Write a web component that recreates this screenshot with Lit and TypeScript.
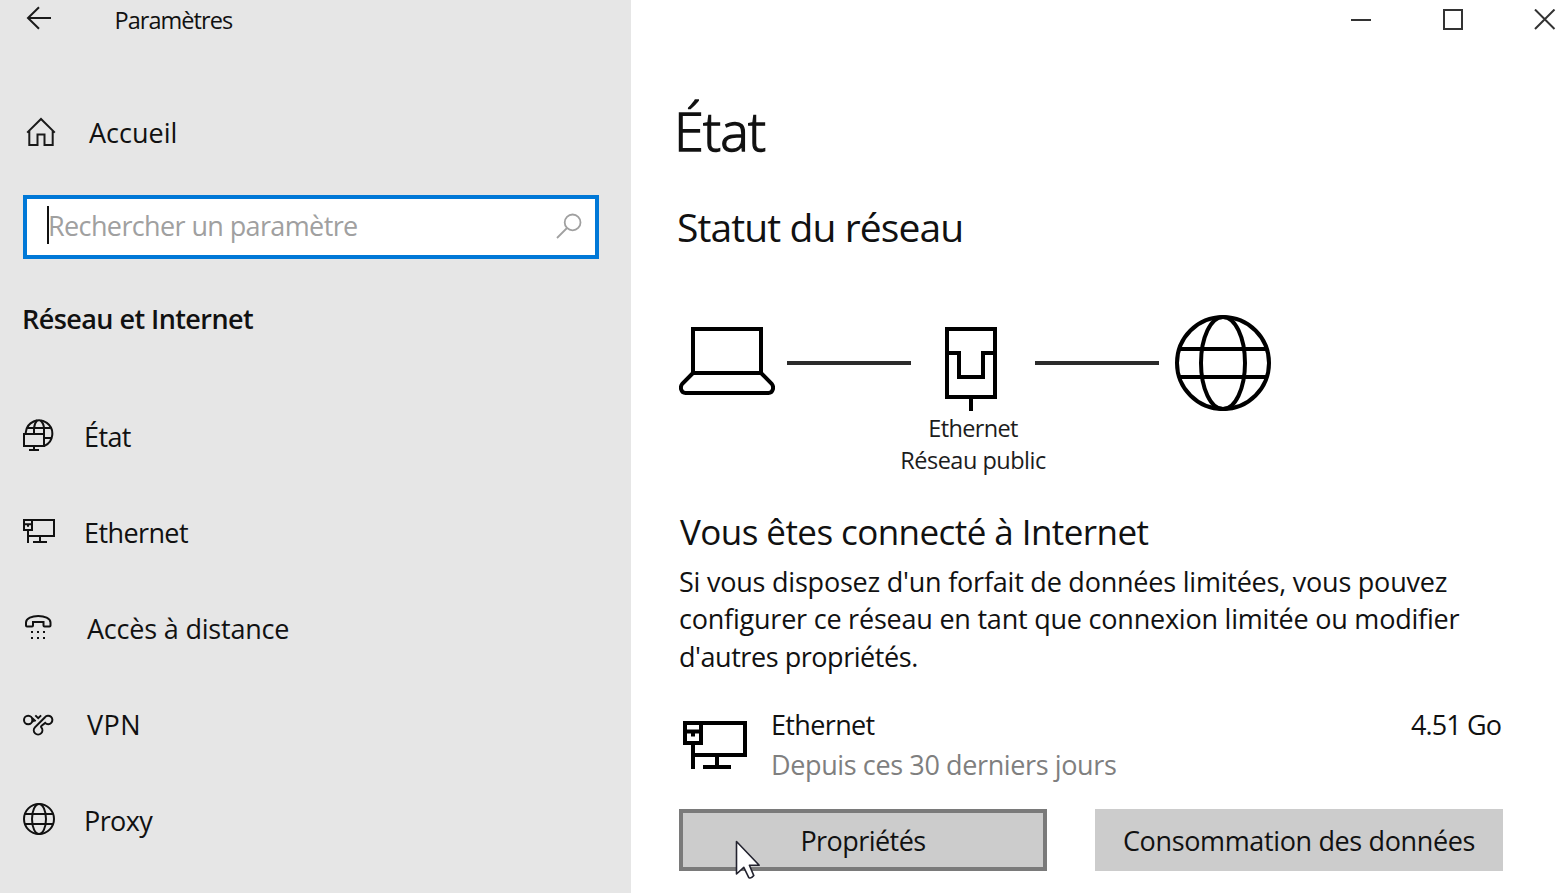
import { LitElement, html, css, svg } from "lit";
import { customElement, property } from "lit/decorators.js";

type IconName = "status" | "ethernet" | "dialup" | "vpn" | "proxy";

const ethernetShape = svg`
  <path d="M2 2H62V34H10M10 24V48M34 34V46M20 46H48" />
  <path d="M2 2H18V22H2ZM2 10.5H18M10 10.5V15.5" />
`;

const navIcons = {
  status: html`<svg width="32" height="32" viewBox="0 0 32 32">
    <path d="M2.8 14.5V13.2A13.3 13.3 0 1 1 21.5 26.8" />
    <path d="M4.2 9H27.8M11 15V9C11.5 5.5 12.8 2.6 14.2 1.2M17.4 1.2C19.4 3.2 21 7 21 9.5V15M21.5 19H29" />
    <path d="M1 15H21V27H1ZM11 27V31M6 31H16" />
  </svg>`,
  ethernet: html`<svg width="32" height="32" viewBox="0 -8 64 64">
    <g stroke-width="4">${ethernetShape}</g>
  </svg>`,
  dialup: html`<svg width="32" height="32" viewBox="0 0 32 32">
    <path d="M3 14V11.5C3 2.7 27.5 2.7 27.5 11.5V14.5Q27.5 15.5 26.5 15.5H21.5Q20.5 15.5 20.5 14.5V11H10V14.5Q10 15.5 9 15.5H4Q3 15.5 3 14.5Z" />
    <path stroke-dasharray="2 4" d="M8 21H22.2M8 27H22.2" />
  </svg>`,
  vpn: html`<svg width="32" height="32" viewBox="0 0 32 32">
    <circle cx="5.2" cy="13" r="4.2" />
    <path d="M11.9 20.4A4.3 4.3 0 1 0 18.3 20.4Q17.6 19.6 18.6 18.8L22.2 15.9A4.2 4.2 0 1 0 22 10.2Z" />
    <path d="M9 11L12.6 14.2M9 15L11.4 12.8M12.3 8.4L15.2 11.2L18.1 8.4" />
  </svg>`,
  proxy: html`<svg width="32" height="32" viewBox="0 0 32 32">
    <circle cx="16" cy="16" r="15" />
    <ellipse cx="16" cy="16" rx="7" ry="15" />
    <path d="M2 11H30M2 21H30" />
  </svg>`,
};

@customElement("nav-item")
export class NavItem extends LitElement {
  static styles = css`
    :host { display: flex; align-items: center; height: 96px; padding-left: 23px; }
    svg { display: block; flex: none; margin-bottom: 4px; fill: none; stroke: #111; stroke-width: 2; }
    .label { margin-left: 29px; line-height: 40px; letter-spacing: var(--track, 0); white-space: nowrap; }
    .label.flush { margin-left: 32px; }
  `;
  @property() icon: IconName = "status";
  @property() label = "";
  @property({ type: Boolean }) flush = false;
  render() {
    return html`${navIcons[this.icon]}<span class="label ${this.flush ? "flush" : ""}">${this.label}</span>`;
  }
}

@customElement("settings-sidebar")
export class SettingsSidebar extends LitElement {
  static styles = css`
    :host { display: flex; flex-direction: column; width: 631px; background: #e6e6e6; }
    svg { display: block; flex: none; fill: none; stroke: #1a1a1a; }
    .titlebar { display: flex; align-items: center; height: 40px; padding-left: 26px; font-size: 23.5px; letter-spacing: -0.95px; line-height: 40px; }
    .titlebar svg { margin-bottom: 4px; }
    .titlebar span { margin-left: 62.5px; }
    .home { display: flex; align-items: center; height: 64px; margin-top: 61px; padding-left: 26px; }
    .home span { margin: 0 0 0 33px; }
    .home svg { margin-bottom: 3px; }
    .search { display: flex; align-items: center; box-sizing: border-box; width: 576px; height: 64px; margin: 30px 0 0 23px; border: 4px solid #0078d7; background: #fff; padding: 0 13px 3px 20px; }
    .caret { width: 2px; height: 38px; margin: 0 -1px 2px 0; background: #111; }
    .search .hint { flex: 1; color: #a0a0a0; letter-spacing: -0.62px; line-height: 40px; }
    .search svg { stroke: #a0a0a0; }
    .section { margin: 40px 0 0 22px; font-weight: 600; line-height: 40px; letter-spacing: -0.56px; }
    nav { margin-top: 50px; }
    .t1 { --track: -0.6px; } .t2 { --track: -0.6px; } .t3 { --track: -0.2px; } .t4 { --track: 0.4px; } .t5 { --track: -0.6px; }
  `;
  render() {
    return html`
      <div class="titlebar">
        <svg width="26" height="24" viewBox="0 0 26 24" stroke-width="2"><path d="M25 12H2M13 1.2L2 12L13 22.8" /></svg>
        <span>Paramètres</span>
      </div>
      <div class="home">
        <svg width="30" height="30" viewBox="0 0 30 30" stroke-width="2"><path d="M1.2 15.6L15 2L28.8 15.6M3.3 13.8V28H11.5V17.5H18.5V28H26.7V13.8" /></svg>
        <span>Accueil</span>
      </div>
      <div class="search">
        <i class="caret"></i><span class="hint">Rechercher un paramètre</span>
        <svg width="26" height="26" viewBox="0 0 26 26" stroke-width="1.8"><circle cx="16.6" cy="9.4" r="7.9" /><path d="M11 15L1 25" /></svg>
      </div>
      <div class="section">Réseau et Internet</div>
      <nav>
        <nav-item class="t1" icon="status" label="État"></nav-item>
        <nav-item class="t2" icon="ethernet" label="Ethernet"></nav-item>
        <nav-item class="t3" icon="dialup" label="Accès à distance" flush></nav-item>
        <nav-item class="t4" icon="vpn" label="VPN" flush></nav-item>
        <nav-item class="t5" icon="proxy" label="Proxy"></nav-item>
      </nav>
    `;
  }
}

@customElement("network-diagram")
export class NetworkDiagram extends LitElement {
  static styles = css`
    :host { display: block; width: 592px; }
    .row { display: flex; align-items: center; }
    svg { display: block; flex: none; fill: none; stroke: #000; stroke-width: 4; }
    .link { width: 124px; height: 4px; margin: 0 12px; background: #2b2b2b; }
    .link.after { margin: 0 16px; }
    .caption { display: flex; flex-direction: column; align-items: center; width: 588px; margin-top: 1px; font-size: 23.5px; line-height: 32px; color: #1c1c1c; }
    .name { letter-spacing: -0.65px; }
    .kind { letter-spacing: -0.5px; }
  `;
  render() {
    return html`
      <div class="row">
        <svg width="96" height="96" viewBox="0 0 96 96"><path d="M14 14H82V58H14ZM14 58L3.5 68.5C.5 72 2 78 6.5 78H89.5C94 78 95.5 72 92.5 68.5L82 58" /></svg>
        <div class="link"></div>
        <svg width="96" height="96" viewBox="-12 0 96 96"><path d="M12 14H60V82H12ZM12 38H24V62H48V38H60M36 82V96" /></svg>
        <div class="link after"></div>
        <svg width="96" height="96" viewBox="0 0 96 96"><circle cx="48" cy="48" r="46" /><ellipse cx="48" cy="48" rx="22" ry="46" /><path d="M4 34H92M4 62H92" /></svg>
      </div>
      <div class="caption"><span class="name">Ethernet</span><span class="kind">Réseau public</span></div>
    `;
  }
}

@customElement("app-root")
export class AppRoot extends LitElement {
  static styles = css`
    :host { display: flex; width: 1564px; height: 893px; overflow: hidden; background: #fff; color: #111; font: 400 27px/40px "Open Sans", "Noto Sans", sans-serif; }
    svg { display: block; flex: none; fill: none; }
    main { flex: 1; display: flex; flex-direction: column; padding-left: 48px; white-space: nowrap; }
    .controls { display: flex; align-items: center; justify-content: flex-end; gap: 70px; height: 40px; padding-right: 8px; }
    .controls svg { stroke: #333; stroke-width: 2; }
    h1, h2, h3, p { margin: 0; font-weight: 400; }
    h1 { margin: 54px 0 0 -5px; font-size: 54px; font-weight: 300; line-height: 72px; letter-spacing: -0.8px; -webkit-text-stroke: 1.3px #111; }
    h2 { margin: 35px 0 0 -2px; font-size: 39px; line-height: 52px; letter-spacing: -0.9px; }
    network-diagram { margin-top: 62px; }
    h3 { margin: 32px 0 0 1px; font-size: 35px; line-height: 48px; letter-spacing: -0.57px; }
    p { margin: 7px 0 0 0; line-height: 37.33px; letter-spacing: -0.22px; }
    p .last { letter-spacing: -0.45px; }
    .usage { display: flex; margin: 30px 0 0 4px; width: 818px; }
    .usage svg { margin-top: 16px; stroke: #000; stroke-width: 4; }
    .detail { flex: 1; display: flex; flex-direction: column; margin-left: 24px; }
    .device { letter-spacing: -0.65px; }
    .since { color: #7f7f7f; letter-spacing: -0.38px; }
    .amount { letter-spacing: -0.9px; }
    .actions { display: flex; gap: 48px; margin-top: 24px; }
    .button { position: relative; display: flex; align-items: center; justify-content: center; box-sizing: border-box; height: 62px; padding-top: 3px; background: #ccc; letter-spacing: -0.36px; }
    .hovered { width: 368px; border: 4px solid #7a7a7a; letter-spacing: -0.55px; }
    .plain { width: 408px; }
    .cursor { position: absolute; left: 52px; top: 27px; }
  `;
  render() {
    return html`
      <settings-sidebar></settings-sidebar>
      <main>
        <div class="controls">
          <svg width="22" height="22" viewBox="0 0 22 22"><path d="M1 11H21" /></svg>
          <svg width="22" height="22" viewBox="0 0 22 22"><path d="M2 1H20V20H2Z" /></svg>
          <svg width="22" height="22" viewBox="0 0 22 22"><path d="M1 .5L20.5 20M20.5 .5L1 20" /></svg>
        </div>
        <h1>État</h1>
        <h2>Statut du réseau</h2>
        <network-diagram></network-diagram>
        <h3>Vous êtes connecté à Internet</h3>
        <p>
          Si vous disposez d'un forfait de données limitées, vous pouvez<br />
          configurer ce réseau en tant que connexion limitée ou modifier<br />
          <span class="last">d'autres propriétés.</span>
        </p>
        <div class="usage">
          <svg width="64" height="48" viewBox="0 0 64 48">${ethernetShape}</svg>
          <div class="detail"><span class="device">Ethernet</span><span class="since">Depuis ces 30 derniers jours</span></div>
          <span class="amount">4.51 Go</span>
        </div>
        <div class="actions">
          <div class="button hovered">Propriétés
            <svg class="cursor" width="26" height="42" viewBox="0 0 26 42" stroke="#23232f" stroke-width="1.6" stroke-linejoin="round">
              <path fill="#fff" d="M1.5 1.5V34L8.8 27.4L13.8 37.6Q16.2 39 18.8 35.6L14.4 25.2H24.2Z" />
            </svg>
          </div>
          <div class="button plain">Consommation des données</div>
        </div>
      </main>
    `;
  }
}
